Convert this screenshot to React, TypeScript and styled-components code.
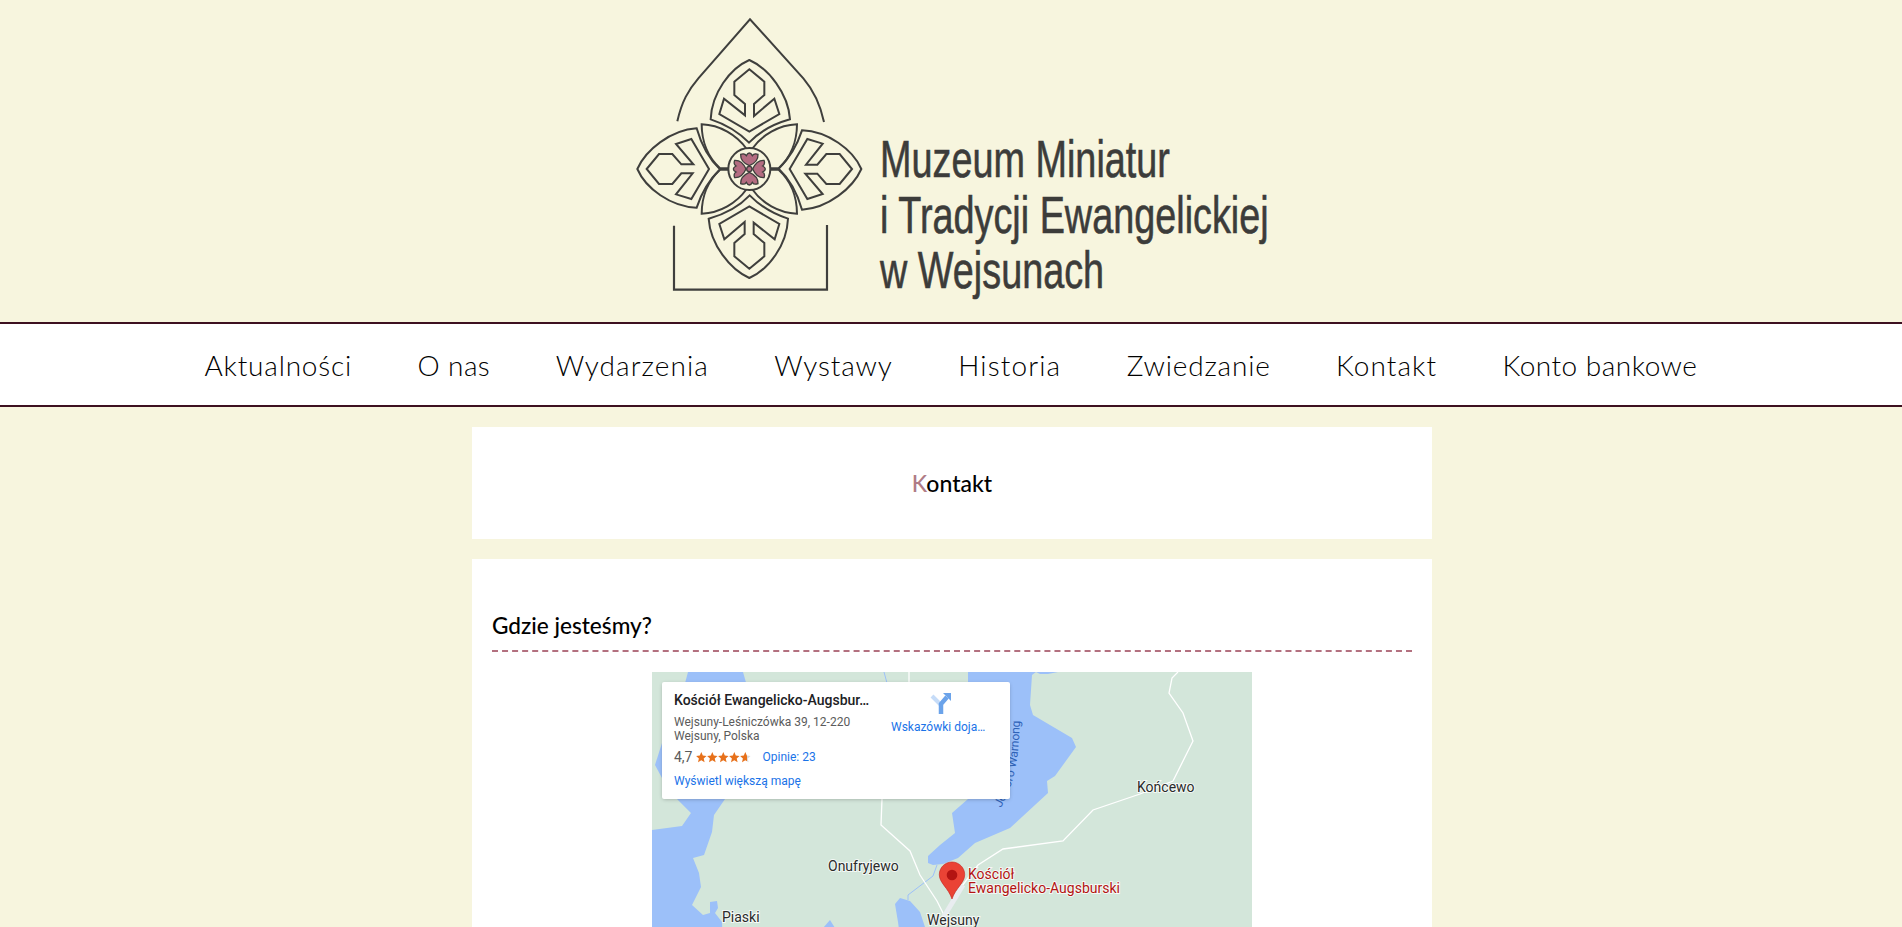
import React from "react";
import styled, { createGlobalStyle } from "styled-components";

const Global = createGlobalStyle`
  html, body { margin: 0; padding: 0; height: 100%; overflow: hidden; background: #f7f5de; }
  * { box-sizing: border-box; }
`;

const Page = styled.div`
  height: 927px;
  overflow: hidden;
  font-family: Lato, "Noto Sans", sans-serif;
  color: #000;
`;

const Header = styled.header`
  height: 322px;
  display: flex;
  justify-content: center;
  align-items: flex-start;
`;

const LogoMark = styled.svg`
  width: 300px;
  height: 310px;
  margin-right: -40px;
  flex: none;
`;

const LogoText = styled.div`
  width: 402px;
  padding-top: 132px;
  font-family: "Liberation Sans", sans-serif;
  font-size: 52px;
  line-height: 55.5px;
  color: #3c3c3a;
  white-space: nowrap;
  transform: scaleX(0.727);
  transform-origin: left top;
  -webkit-text-stroke: 0.6px #3c3c3a;
`;

const LogoLine = styled.div``;

const Nav = styled.nav`
  height: 85px;
  background: #fff;
  border-top: 2px solid #3d1020;
  border-bottom: 2px solid #3d1020;
  display: flex;
  justify-content: center;
  align-items: center;
  gap: 65.5px;
`;

const NavItem = styled.a<{ $spacing: number }>`
  font-size: 28px;
  font-weight: 300;
  letter-spacing: ${(p) => p.$spacing}px;
  color: #000;
  white-space: nowrap;
`;

const Main = styled.main`
  width: 960px;
  margin-left: 472px;
  padding-top: 20px;
  display: flex;
  flex-direction: column;
  gap: 20px;
`;

const TitleCard = styled.section`
  height: 112px;
  background: #fff;
  display: flex;
  align-items: center;
  justify-content: center;
`;

const PageTitle = styled.h1`
  margin: 0;
  font-size: 23px;
  font-weight: 500;
  color: #000;
`;

const Initial = styled.span`
  color: #b07c86;
`;

const ContentCard = styled.section`
  background: #fff;
  padding: 53px 20px 20px;
`;

const SectionTitle = styled.h2`
  margin: 0;
  font-size: 22.6px;
  line-height: 28px;
  font-weight: 500;
  padding-bottom: 10px;
  border-bottom: 2px dashed #b3707f;
`;

const MapFrame = styled.div`
  position: relative;
  width: 600px;
  height: 450px;
  margin: 20px auto 0;
  background: #d3e6da;
  overflow: hidden;
  font-family: Roboto, Arial, sans-serif;
`;

const MapArt = styled.svg`
  display: block;
  width: 600px;
  height: 450px;
`;

const PlaceCard = styled.div`
  position: absolute;
  left: 10px;
  top: 10px;
  width: 348px;
  height: 117px;
  background: #fff;
  border-radius: 2px;
  box-shadow: 0 1px 4px -1px rgba(0, 0, 0, 0.3);
  display: flex;
`;

const PlaceInfo = styled.div`
  width: 222px;
  padding: 10px 0 0 12px;
  flex: none;
`;

const PlaceName = styled.div`
  font-size: 14px;
  line-height: 16px;
  font-weight: 500;
  color: #202124;
  white-space: nowrap;
`;

const Address = styled.div`
  margin-top: 7px;
  font-size: 12px;
  line-height: 14px;
  color: #5b5b5b;
`;

const RatingRow = styled.div`
  margin-top: 6px;
  height: 16px;
  display: flex;
  align-items: center;
  font-size: 14px;
  line-height: 16px;
  color: #5b5b5b;
`;

const Stars = styled.svg`
  width: 55px;
  height: 12px;
  margin-left: 3px;
  flex: none;
`;

const MapLink = styled.a`
  font-size: 12px;
  line-height: 14px;
  color: #1a73e8;
  white-space: nowrap;
`;

const ReviewLink = styled(MapLink)`
  margin-left: 12px;
`;

const BiggerMap = styled(MapLink)`
  display: block;
  margin-top: 9px;
`;

const Directions = styled.div`
  width: 100px;
  margin-left: 7px;
  padding-top: 9px;
  display: flex;
  flex-direction: column;
  align-items: flex-start;
`;

const DirectionsIcon = styled.svg`
  width: 24px;
  height: 24px;
  margin-left: 38px;
`;

const DirectionsLabel = styled(MapLink)`
  display: block;
  margin-top: 5px;
`;

const MapLabel = styled.text<{ $accent?: boolean }>`
  font-family: Roboto, Arial, sans-serif;
  font-size: 14px;
  fill: ${(p) => (p.$accent ? "#b31412" : "#2b2b2b")};
  stroke: #fff;
  stroke-width: 2px;
  stroke-opacity: 0.75;
  paint-order: stroke;
`;

const LakeLabel = styled.text`
  font-family: Roboto, Arial, sans-serif;
  font-size: 12px;
  fill: #2f63b8;
`;

const ink = "#3f3f3d";

const Petal = ({ transform }: { transform?: string }) => (
  <g transform={transform} fill="none" stroke={ink} strokeWidth="6" strokeLinejoin="miter">
    <path d="M388 180 C330 205 275 280 272 358 Q340 380 387 428 Q432 380 510 358 C505 280 445 205 388 180Z" />
    <path d="M388 208 L433 245 L433 285 L402 312 L402 348 L463 296 L478 342 L388 395 L298 342 L312 296 L375 346 L375 312 L343 285 L343 245Z" />
  </g>
);

const Leaf = ({ transform }: { transform?: string }) => (
  <path
    transform={transform}
    fill="none"
    stroke={ink}
    strokeWidth="6"
    d="M245 373 C300 375 350 405 380 447 L388 507 L325 505 L300 505 C262 470 245 420 245 373Z"
  />
);

const Bloom = ({ transform }: { transform?: string }) => (
  <path
    transform={transform}
    fill="#b36c81"
    stroke={ink}
    strokeWidth="4"
    d="M388 497 C372 490 361 478 362 463 C370 460 376 462 379 467 C382 461 385 459 388 459 C391 459 394 461 397 467 C400 462 406 460 414 463 C415 478 404 490 388 497Z"
  />
);

const Logo = () => (
  <LogoMark viewBox="0 0 900 930" aria-hidden="true">
    <path
      d="M172 364 C185 305 205 270 235 235 L390 58 L550 235 C580 270 600 310 612 366"
      fill="none"
      stroke={ink}
      strokeWidth="6"
    />
    <path d="M162 677 V869 H621 V675" fill="none" stroke={ink} strokeWidth="6.500" />
    <Leaf />
    <Leaf transform="matrix(-1 0 0 1 776 0)" />
    <Leaf transform="matrix(1 0 0 -1 0 1014)" />
    <Leaf transform="matrix(-1 0 0 -1 776 1014)" />
    <Petal />
    <Petal transform="rotate(180 388 507)" />
    <Petal transform="rotate(90 388 507) translate(0 -9)" />
    <Petal transform="rotate(-90 388 507) translate(0 -9)" />
    <circle cx="388" cy="507" r="63" fill="#f7f5de" stroke={ink} strokeWidth="6" />
    <Bloom />
    <Bloom transform="rotate(90 388 507)" />
    <Bloom transform="rotate(180 388 507)" />
    <Bloom transform="rotate(270 388 507)" />
    <circle cx="388" cy="507" r="8" fill="#b36c81" stroke={ink} strokeWidth="4" />
  </LogoMark>
);

const water = "#9cc0f9";

const MapDrawing = () => (
  <MapArt viewBox="0 0 600 450" aria-hidden="true">
    <rect width="600" height="450" fill="#d3e6da" />
    <g fill={water}>
      <path d="M36 0 L91 0 L95 14 L73 127 L62 143 L60 160 L52 183 L41 186 L47 201 L49 215 L40 233 L51 243 L58 241 L58 230 L65 229 L66 236 L63 241 L70 250 L72 300 L0 300 L0 158 L30 154 L39 141 L25 127 L20 60Z" />
      <path d="M10 71 L3 93 L10 106 L30 100 L30 75Z" />
      <path d="M316 0 L316 127 L300 141 L303 161 L288 173 L276 184 L276 191 L281 193 L291 192 L306 186 L323 171 L358 156 L396 121 L395 109 L403 104 L424 75 L420 66 L381 43 L378 33 L380 3 L384 0Z" />
      <path d="M384 0 H406 L396 2 H388Z" />
      <path d="M243 232 L248 226 L258 229 L268 240 L273 255 L276 280 L250 280 L246 250Z" />
      <path d="M171 256 L178 248 L183 256Z" />
    </g>
    <path d="M232 0 L235 11" fill="none" stroke={water} strokeWidth="1" />
    <path d="M285 193 L281 204 L256 223 L256 228" fill="none" stroke={water} strokeWidth="1" />
    <path id="lakeCurve" d="M349 136 C358 118 368 100 368 36" fill="none" />
    <LakeLabel>
      <textPath href="#lakeCurve">Jezioro Warnong</textPath>
    </LakeLabel>
    <g fill="none" stroke="#fff" strokeWidth="1.3">
      <path d="M257 0 V12 M230 127 L229 153 L258 179 L268 203 L285 229 L291 241 L300 262" />
      <path d="M303 223 L326 193 L351 177 L411 169 L441 138 L488 122 L521 109 L541 69 L531 41 L517 21 L520 6 L526 0" />
    </g>
    <path d="M291 246 L311 213" fill="none" stroke="#e9edf0" strokeWidth="5" />
    <MapLabel x="176" y="199">Onufryjewo</MapLabel>
    <MapLabel x="485" y="120">Końcewo</MapLabel>
    <MapLabel x="70" y="250">Piaski</MapLabel>
    <MapLabel x="275" y="253">Wejsuny</MapLabel>
    <path
      d="M300 190 C293 190 287.300 195.600 287.300 202.700 C287.300 211 296.500 216 300 227 C303.500 216 312.700 211 312.700 202.700 C312.700 195.600 307 190 300 190Z"
      fill="#ea4335"
      stroke="#c5221f"
      strokeWidth="0.6"
    />
    <circle cx="300" cy="203" r="5.300" fill="#b31412" />
    <MapLabel $accent x="316" y="207">Kościół</MapLabel>
    <MapLabel $accent x="316" y="221">Ewangelicko-Augsburski</MapLabel>
  </MapArt>
);

const star = "M5.300 0.500 L6.800 4.100 L10.500 4.400 L7.700 6.900 L8.600 10.700 L5.300 8.700 L2 10.700 L2.900 6.900 L0.100 4.400 L3.800 4.100Z";

const RatingStars = () => (
  <Stars viewBox="0 0 55 12" aria-hidden="true">
    <defs>
      <linearGradient id="partial">
        <stop offset="62%" stopColor="#e7711b" />
        <stop offset="62%" stopColor="#d9d9d9" />
      </linearGradient>
    </defs>
    {[0, 1, 2, 3, 4].map((i) => (
      <path key={i} d={star} transform={`translate(${i * 11} 0.500)`} fill={i === 4 ? "url(#partial)" : "#e7711b"} />
    ))}
  </Stars>
);

const navItems: [string, number][] = [
  ["Aktualności", 0.8],
  ["O nas", 0.4],
  ["Wydarzenia", 1.05],
  ["Wystawy", 0.85],
  ["Historia", 1.15],
  ["Zwiedzanie", 0.8],
  ["Kontakt", 1.05],
  ["Konto bankowe", 0.5],
];

export default function App() {
  return (
    <Page>
      <Global />
      <Header>
        <Logo />
        <LogoText>
          <LogoLine>Muzeum Miniatur</LogoLine>
          <LogoLine>i Tradycji Ewangelickiej</LogoLine>
          <LogoLine>w Wejsunach</LogoLine>
        </LogoText>
      </Header>
      <Nav>
        {navItems.map(([label, spacing]) => (
          <NavItem key={label} $spacing={spacing}>{label}</NavItem>
        ))}
      </Nav>
      <Main>
        <TitleCard>
          <PageTitle>
            <Initial>K</Initial>ontakt
          </PageTitle>
        </TitleCard>
        <ContentCard>
          <SectionTitle>Gdzie jesteśmy?</SectionTitle>
          <MapFrame>
            <MapDrawing />
            <PlaceCard>
              <PlaceInfo>
                <PlaceName>Kościół Ewangelicko-Augsbur…</PlaceName>
                <Address>
                  Wejsuny-Leśniczówka 39, 12-220
                  <br />
                  Wejsuny, Polska
                </Address>
                <RatingRow>
                  4,7
                  <RatingStars />
                  <ReviewLink>Opinie: 23</ReviewLink>
                </RatingRow>
                <BiggerMap>Wyświetl większą mapę</BiggerMap>
              </PlaceInfo>
              <Directions>
                <DirectionsIcon viewBox="0 0 24 24" aria-hidden="true">
                  <path d="M3 5 L12 14" stroke="#c6dcf8" strokeWidth="4" fill="none" />
                  <path d="M12 23 V13 L18 6" stroke="#6ba3ea" strokeWidth="4.500" fill="none" />
                  <path d="M14 2 H22 V10Z" fill="#6ba3ea" />
                </DirectionsIcon>
                <DirectionsLabel>Wskazówki doja…</DirectionsLabel>
              </Directions>
            </PlaceCard>
          </MapFrame>
        </ContentCard>
      </Main>
    </Page>
  );
}
